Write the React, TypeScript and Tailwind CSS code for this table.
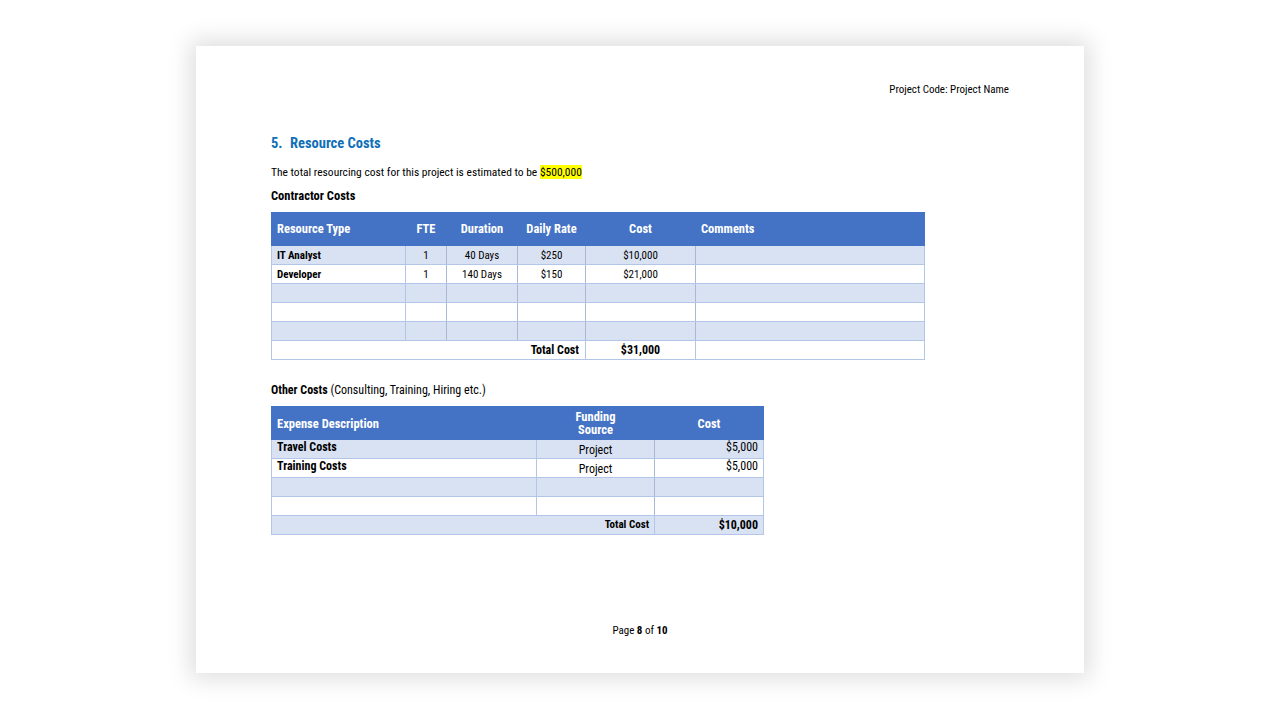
import React from "react";

const contractorRows = [
  { type: "IT Analyst", fte: "1", duration: "40 Days", rate: "$250", cost: "$10,000" },
  { type: "Developer", fte: "1", duration: "140 Days", rate: "$150", cost: "$21,000" },
  { type: "", fte: "", duration: "", rate: "", cost: "" },
  { type: "", fte: "", duration: "", rate: "", cost: "" },
  { type: "", fte: "", duration: "", rate: "", cost: "" },
];

const otherRows = [
  { desc: "Travel Costs", source: "Project", cost: "$5,000" },
  { desc: "Training Costs", source: "Project", cost: "$5,000" },
  { desc: "", source: "", cost: "" },
  { desc: "", source: "", cost: "" },
];

const App = () => {
  return (
    <div className="w-full h-[720px] bg-white pt-[46px] pl-[196px] overflow-hidden font-['Roboto_Condensed','Liberation_Sans',sans-serif]">
      {/* === Page === */}
      <div className="w-[888px] h-[627px] bg-white shadow-[0_0_22px_6px_rgba(0,0,0,0.13)] flex flex-col px-[75px] pt-[37px] pb-[35px] text-black">
        <div className="text-right text-[11px] leading-[14px]">Project Code: Project Name</div>

        <h2 className="mt-[38px] text-[14.5px] leading-[18px] font-bold text-[#0f6fb7] flex">
          <span className="w-[19px]">5.</span>
          <span>Resource Costs</span>
        </h2>

        <p className="mt-[11px] text-[11.5px] leading-[16px]">
          The total resourcing cost for this project is estimated to be{" "}
          <span className="bg-[#ffff00]">$500,000</span>
        </p>

        <p className="mt-[8px] text-[12.5px] leading-[16px] font-bold">Contractor Costs</p>

        {/* === Contractor table === */}
        <table className="mt-[8px] w-[653px] border-collapse table-fixed text-[11px]">
          <colgroup>
            <col className="w-[134px]" />
            <col className="w-[41px]" />
            <col className="w-[71px]" />
            <col className="w-[68px]" />
            <col className="w-[110px]" />
            <col className="w-[229px]" />
          </colgroup>
          <thead>
            <tr className="h-[33px] bg-[#4472c4] text-white text-[12.5px] font-bold">
              <th className="pl-[5px] text-left font-bold border border-[#4472c4]">Resource Type</th>
              <th className="text-center font-bold border border-[#4472c4]">FTE</th>
              <th className="text-center font-bold border border-[#4472c4]">Duration</th>
              <th className="text-center font-bold border border-[#4472c4]">Daily Rate</th>
              <th className="text-center font-bold border border-[#4472c4]">Cost</th>
              <th className="pl-[5px] text-left font-bold border border-[#4472c4]">Comments</th>
            </tr>
          </thead>
          <tbody>
            {contractorRows.map((r, idx) => (
              <tr key={idx} className={`h-[19px] ${idx % 2 === 0 ? "bg-[#d9e2f3]" : "bg-white"}`}>
                <td className="pl-[5px] font-bold border border-[#b4c6e7] leading-[13px]">{r.type}</td>
                <td className="text-center border border-[#b4c6e7] border-r-[#a9b9d3] leading-[13px]">{r.fte}</td>
                <td className="text-center border border-[#b4c6e7] border-r-[#a9b9d3] leading-[13px]">{r.duration}</td>
                <td className="text-center border border-[#b4c6e7] border-r-[#a9b9d3] leading-[13px]">{r.rate}</td>
                <td className="text-center border border-[#b4c6e7] border-r-[#a9b9d3] leading-[13px]">{r.cost}</td>
                <td className="border border-[#b4c6e7]"></td>
              </tr>
            ))}
            <tr className="h-[19px] bg-white text-[12px] font-bold">
              <td colSpan={4} className="pr-[6px] text-right border border-[#b4c6e7] leading-[14px]">Total Cost</td>
              <td className="text-center border border-[#b4c6e7] leading-[14px]">$31,000</td>
              <td className="border border-[#b4c6e7]"></td>
            </tr>
          </tbody>
        </table>

        <p className="mt-[22px] text-[12px] leading-[16px]">
          <span className="font-bold">Other Costs</span> (Consulting, Training, Hiring etc.)
        </p>

        {/* === Other costs table === */}
        <table className="mt-[8px] w-[492px] border-collapse table-fixed text-[12px]">
          <colgroup>
            <col className="w-[265px]" />
            <col className="w-[118px]" />
            <col className="w-[109px]" />
          </colgroup>
          <thead>
            <tr className="h-[33px] bg-[#4472c4] text-white text-[12.5px] font-bold leading-[13px]">
              <th className="pl-[5px] text-left font-bold border border-[#4472c4]">Expense Description</th>
              <th className="text-center font-bold border border-[#4472c4]">
                Funding
                <br />
                Source
              </th>
              <th className="text-center font-bold border border-[#4472c4]">Cost</th>
            </tr>
          </thead>
          <tbody>
            {otherRows.map((r, idx) => (
              <tr key={idx} className={`h-[19px] ${idx % 2 === 0 ? "bg-[#d9e2f3]" : "bg-white"}`}>
                <td className="pl-[5px] font-bold align-top border border-[#b4c6e7] leading-[14px]">{r.desc}</td>
                <td className="text-center align-bottom border border-[#b4c6e7] border-r-[#a9b9d3] leading-[15px]">{r.source}</td>
                <td className="pr-[5px] text-right align-top border border-[#b4c6e7] leading-[14px]">{r.cost}</td>
              </tr>
            ))}
            <tr className="h-[19px] bg-[#d9e2f3] font-bold">
              <td colSpan={2} className="pr-[5px] text-right text-[11px] border border-[#b4c6e7] leading-[14px]">Total Cost</td>
              <td className="pr-[5px] text-right border border-[#b4c6e7] leading-[14px]">$10,000</td>
            </tr>
          </tbody>
        </table>

        {/* === Footer === */}
        <div className="mt-auto text-center text-[11px] leading-[14px]">
          Page <span className="font-bold">8</span> of <span className="font-bold">10</span>
        </div>
      </div>
    </div>
  );
};

export default App;
